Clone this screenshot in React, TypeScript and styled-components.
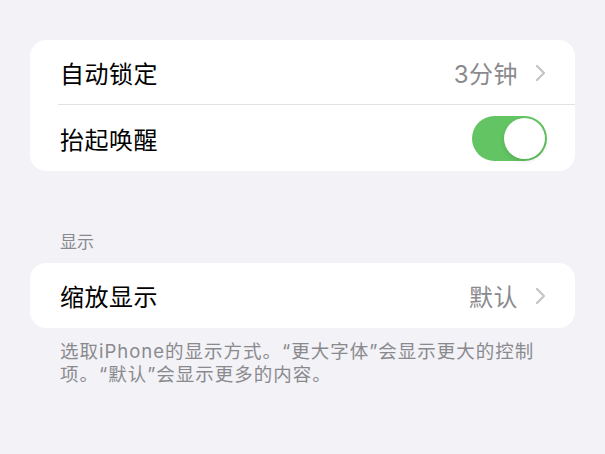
import React, { FC } from 'react'
import styled, { createGlobalStyle } from 'styled-components'

const GlobalStyle = createGlobalStyle`
  html, body {
    margin: 0;
    padding: 0;
    background: #f2f2f7;
  }
  body {
    font-family: Inter, "Noto Sans CJK SC", sans-serif;
  }
`

const Page = styled.div`
  display: flex;
  flex-flow: column nowrap;
  width: 605px;
  height: 454px;
  box-sizing: border-box;
  padding: 40px 30px 0 30px;
  background: #f2f2f7;
`

const Card = styled.div`
  display: flex;
  flex-flow: column nowrap;
  border-radius: 16px;
  background: #ffffff;
  overflow: hidden;
`

const Row = styled.div<{ divider?: boolean; tall?: boolean }>`
  position: relative;
  display: flex;
  flex-flow: row nowrap;
  align-items: center;
  justify-content: space-between;
  height: ${({ tall }) => (tall ? '66px' : '65px')};
  padding-left: 30px;
  padding-right: 29px;

  ${({ divider }) => divider && `
    &::after {
      content: '';
      position: absolute;
      left: 28px;
      right: 0;
      bottom: 0;
      height: 1px;
      background: #e2e2e6;
    }
  `}
`

const Label = styled.span`
  font-size: 24px;
  color: #000000;
  letter-spacing: 0.5px;
`

const Trailing = styled.div`
  display: flex;
  flex-flow: row nowrap;
  align-items: center;
  gap: 17px;
`

const Value = styled.span`
  font-size: 24px;
  color: #8a8a8e;
  letter-spacing: 0.5px;
`

const Switch = styled.div<{ on: boolean }>`
  display: flex;
  align-items: center;
  justify-content: ${({ on }) => (on ? 'flex-end' : 'flex-start')};
  width: 75px;
  height: 45px;
  box-sizing: border-box;
  padding: 2px;
  border-radius: 23px;
  background: ${({ on }) => (on ? '#62c462' : '#e5e5ea')};
  margin-right: -1px;
`

const Knob = styled.div`
  width: 41px;
  height: 41px;
  border-radius: 50%;
  background: #ffffff;
  box-shadow: 0 2px 4px rgba(0, 0, 0, 0.12);
`

const SectionHeader = styled.div`
  margin-top: 60px;
  margin-bottom: 10px;
  padding-left: 30px;
  font-size: 17px;
  line-height: 22px;
  color: #8a8a8e;
`

const Footer = styled.div`
  margin-top: 12px;
  padding-left: 30px;
  padding-right: 30px;
  font-size: 18.5px;
  line-height: 23px;
  letter-spacing: 1px;
  color: #8a8a8e;
`

const Chevron: FC = () => (
  <svg width="11" height="18" viewBox="0 0 11 18" fill="none">
    <path d="M2 2l7 7-7 7" stroke="#c4c4c7" strokeWidth="2.2" strokeLinecap="round" strokeLinejoin="round" />
  </svg>
)

const App: FC = () => (
  <>
    <GlobalStyle />
    <Page>
      <Card>
        <Row divider>
          <Label>自动锁定</Label>
          <Trailing>
            <Value>3分钟</Value>
            <Chevron />
          </Trailing>
        </Row>
        <Row tall>
          <Label>抬起唤醒</Label>
          <Switch on>
            <Knob />
          </Switch>
        </Row>
      </Card>
      <SectionHeader>显示</SectionHeader>
      <Card>
        <Row>
          <Label>缩放显示</Label>
          <Trailing>
            <Value>默认</Value>
            <Chevron />
          </Trailing>
        </Row>
      </Card>
      <Footer>
        选取iPhone的显示方式。“更大字体”会显示更大的控制项。“默认”会显示更多的内容。
      </Footer>
    </Page>
  </>
)

export default App
